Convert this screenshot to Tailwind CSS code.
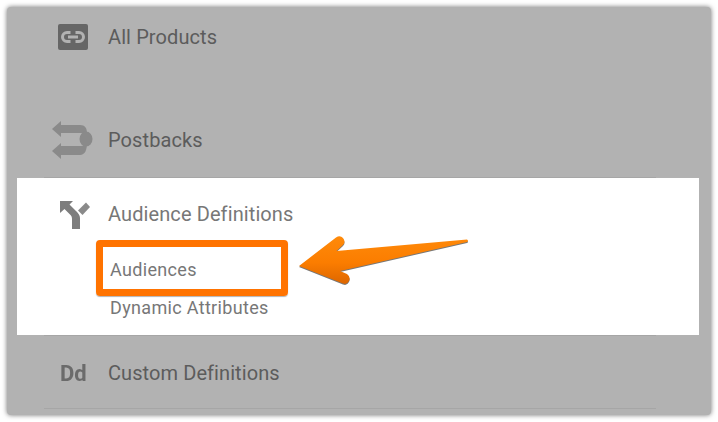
<!DOCTYPE html>
<html><head><meta charset="utf-8"><script src="https://cdn.jsdelivr.net/npm/@tailwindcss/browser@4"></script></head>
<body class="bg-white">
<div class="relative w-[718px] h-[422px] overflow-hidden bg-white pt-[7px] pl-[7px] font-['Roboto',sans-serif]">
  <div class="flex flex-col w-[704px] h-[408px] bg-[#b2b2b2] rounded-[4px] shadow-[0_0_5px_rgba(0,0,0,0.55)]">
    <div class="flex items-center h-[60px] pl-[51px] shrink-0">
      <svg class="w-[30px] h-[26px] shrink-0 blur-[0.4px]" viewBox="0 0 30 26"><rect width="30" height="26" rx="2" fill="#666666"/><path d="M12.500 8.500H9a4.500 4.500 0 0 0 0 9h3.500M17.500 8.500H21a4.500 4.500 0 0 1 0 9h-3.500M10 13h10" fill="none" stroke="#b2b2b2" stroke-width="3"/></svg>
      <span class="ml-[20px] text-[20px] leading-[24px] tracking-[0.1px] text-[#5c5c5c]">All Products</span>
    </div>
    <div class="flex items-center h-[110px] pt-[35px] pl-[45px] shrink-0">
      <svg class="w-[41px] h-[40px] shrink-0 blur-[0.6px]" viewBox="0 0 41 40" fill="#8a8a8a"><path d="M0 9 L9 1V5H28C33 5 35 8 35 13H9V17Z"/><path d="M0 31 L9 23V26H28C32 26 33 25 35 23C35 30 33 35 28 35H9V39Z"/><ellipse cx="34" cy="19" rx="6.500" ry="7.500"/></svg>
      <span class="ml-[15px] text-[20px] leading-[24px] tracking-[0.1px] text-[#5c5c5c]">Postbacks</span>
    </div>
    <div class="h-px ml-[37px] mr-[55px] bg-[#a6a6a6] shrink-0"></div>
    <div class="flex flex-col ml-[10px] w-[682px] h-[157px] bg-white shrink-0 text-[#777777]">
      <div class="flex items-center h-[72px] pl-[42px] pb-[1px] shrink-0">
        <svg class="w-[31px] h-[30px] shrink-0 mt-[3px] blur-[0.4px]" viewBox="0 0 31 30"><path d="M1 1H14L10.500 4.500 17 11C19 13 21 15 21 18V29H13V19C13 17 12.500 16 11 14.500L5.500 9 1 13Z" fill="#7d7d7d"/><path d="M19 10.500 27 2.500 31 7 23.500 15Z" fill="#8a8a8a"/></svg>
        <span class="ml-[18px] text-[20px] leading-[24px] tracking-[0.1px]">Audience Definitions</span>
      </div>
      <div class="pl-[93px] text-[18px] leading-[22px] tracking-[0.33px]">
        <div class="mt-[9px]">Audiences</div>
        <div class="mt-[16px]">Dynamic Attributes</div>
      </div>
    </div>
    <div class="h-px ml-[37px] mr-[55px] bg-[#a6a6a6] shrink-0"></div>
    <div class="flex items-center h-[72px] pl-[53px] pt-[2px] shrink-0">
      <span class="w-[30px] shrink-0 text-[22px] leading-[24px] font-bold text-[#6b6b6b] blur-[0.3px] translate-y-px">Dd</span>
      <span class="ml-[18px] text-[20px] leading-[24px] tracking-[0.08px] text-[#5c5c5c]">Custom Definitions</span>
    </div>
    <div class="h-px ml-[37px] mr-[55px] bg-[#a6a6a6] shrink-0"></div>
  </div>
  <div class="absolute left-[96px] top-[240px] w-[192px] h-[56px] border-[7px] border-[#ff7300] rounded-[4px] shadow-[0_1px_1px_rgba(0,0,0,0.3)]"></div>
  <svg class="absolute left-0 top-0 w-[718px] h-[422px]" viewBox="0 0 718 422">
    <defs><linearGradient id="a" x1="0" y1="0" x2="0" y2="1"><stop offset="0" stop-color="#ff8a0a"/><stop offset="0.55" stop-color="#fb7d00"/><stop offset="1" stop-color="#dd6600"/></linearGradient></defs>
    <path d="M299 266 L336 237.500 Q340 235 343 238 Q346 242 343 245 L336.500 251 L467 239.500 Q469 241 467 242 L340 271 L347 274 Q351 277 349 281 Q347 285 343 283.500 Z" fill="#777" transform="translate(0 1)"/>
    <path d="M299 266 L336 237.500 Q340 235 343 238 Q346 242 343 245 L336.500 251 L467 239.500 Q469 241 467 242 L340 271 L347 274 Q351 277 349 281 Q347 285 343 283.500 Z" fill="url(#a)"/>
  </svg>
</div>
</body></html>
